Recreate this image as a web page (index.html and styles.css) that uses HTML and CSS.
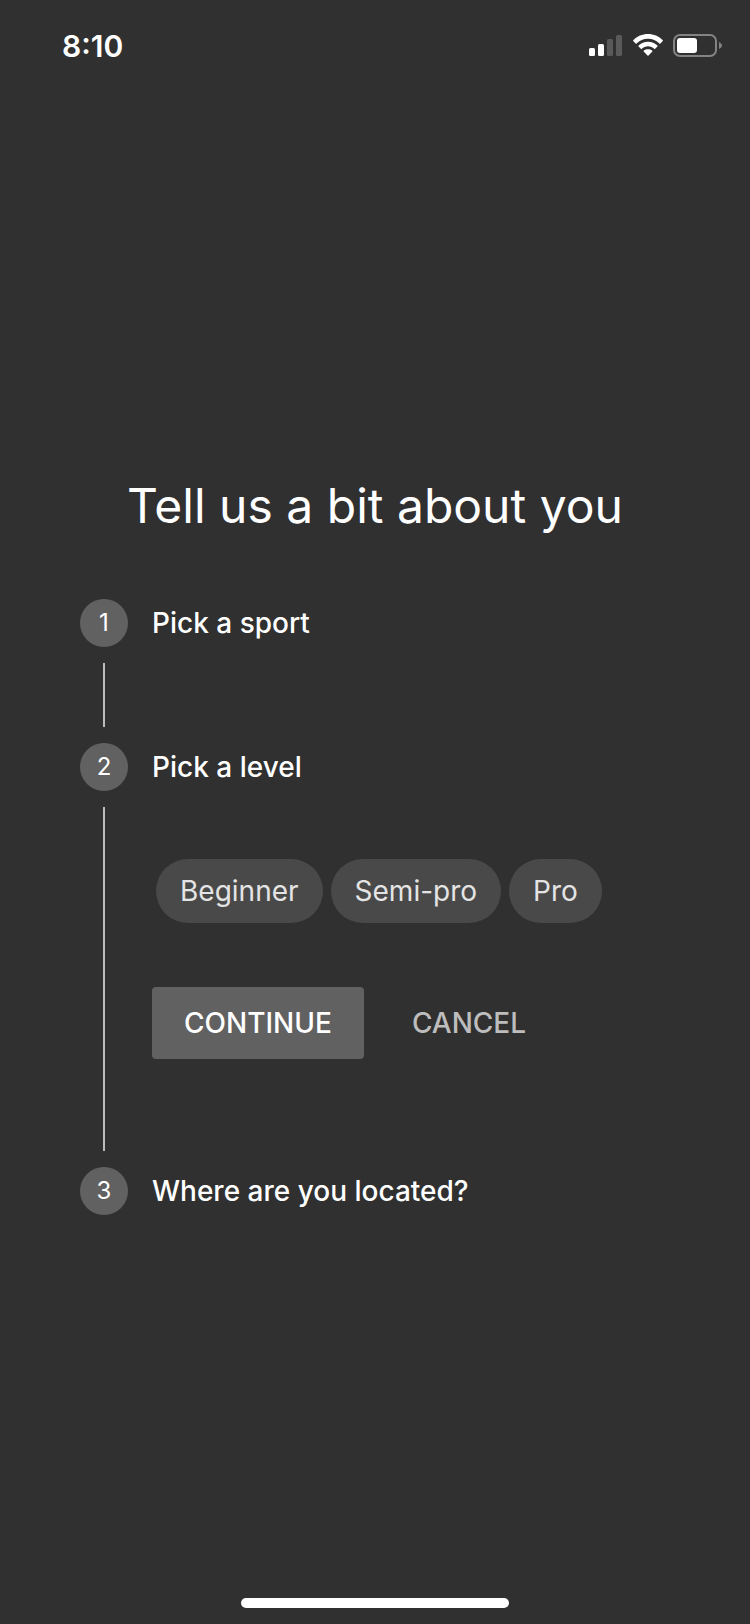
FILE: index.html
```html
<!DOCTYPE html>
<html lang="en">
<head>
<meta charset="utf-8">
<meta name="viewport" content="width=device-width, initial-scale=1">
<title>Tell us a bit about you</title>
<link rel="stylesheet" href="styles.css">
</head>
<body>
<header class="status-bar">
  <time class="status-time">8:10</time>
  <div class="status-icons">
    <svg class="icon-signal" viewBox="0 0 34 22" role="img" aria-label="Signal">
      <rect class="on" x="0" y="14" width="6" height="8" rx="1.5"/>
      <rect class="on" x="9" y="10" width="6" height="12" rx="1.5"/>
      <rect class="off" x="18" y="5" width="6" height="17" rx="1.5"/>
      <rect class="off" x="27" y="1" width="6" height="21" rx="1.5"/>
    </svg>
    <svg class="icon-wifi" viewBox="0 0 30 22" role="img" aria-label="Wi-Fi">
      <path d="M15 0C9.200 0 4 2.300 .4 6.100a.8.8 0 0 0 0 1.100L2.600 9.400a.7.7 0 0 0 1 0C6.500 6.400 10.500 4.700 15 4.700s8.500 1.700 11.400 4.700a.7.7 0 0 0 1 0l2.200-2.200a.8.8 0 0 0 0-1.100C26 2.300 20.800 0 15 0z"/>
      <path d="M15 7.700c-3.700 0-7 1.400-9.400 3.800a.8.8 0 0 0 0 1.100l2.200 2.200a.8.8 0 0 0 1 0c1.600-1.500 3.800-2.500 6.200-2.500s4.600 1 6.200 2.500a.8.8 0 0 0 1 0l2.200-2.200a.8.8 0 0 0 0-1.100C22 9.100 18.700 7.700 15 7.700z"/>
      <path d="M15 15.200c-1.600 0-3 .5-4.100 1.400a.8.8 0 0 0 0 1.200l3.600 3.800a.7.7 0 0 0 1 0l3.600-3.800a.8.8 0 0 0 0-1.200c-1.100-.9-2.500-1.400-4.100-1.400z"/>
    </svg>
    <svg class="icon-battery" viewBox="0 0 50 24" role="img" aria-label="Battery">
      <rect class="shell" x="1" y="1" width="42" height="21" rx="6"/>
      <rect class="charge" x="4" y="4" width="20" height="15" rx="3"/>
      <path class="cap" d="M46 8c1.700.7 3 2.100 3 3.500s-1.300 2.800-3 3.500z"/>
    </svg>
  </div>
</header>

<main class="onboarding">
  <h1 class="title">Tell us a bit about you</h1>
  <ol class="stepper">
    <li class="step">
      <span class="step-number">1</span>
      <h2 class="step-label">Pick a sport</h2>
      <span class="step-line"></span>
    </li>
    <li class="step">
      <span class="step-number">2</span>
      <h2 class="step-label">Pick a level</h2>
      <span class="step-line"></span>
      <div class="step-content">
        <div class="chips">
          <button type="button" class="chip">Beginner</button>
          <button type="button" class="chip">Semi-pro</button>
          <button type="button" class="chip">Pro</button>
        </div>
        <div class="actions">
          <button type="button" class="button button-primary">CONTINUE</button>
          <button type="button" class="button button-text">CANCEL</button>
        </div>
      </div>
    </li>
    <li class="step">
      <span class="step-number">3</span>
      <h2 class="step-label">Where are you located?</h2>
    </li>
  </ol>
</main>

<footer class="home-area"><div class="home-indicator"></div></footer>
</body>
</html>
```
FILE: styles.css
```css
* {
  box-sizing: border-box;
}

body {
  margin: 0;
  min-height: 100vh;
  display: flex;
  flex-direction: column;
  background: #303030;
  color: #fff;
  font-family: Inter, "Liberation Sans", sans-serif;
  font-size: 28px;
}

button {
  border: 0;
  font: inherit;
  color: inherit;
  cursor: pointer;
}

.status-bar {
  height: 96px;
  padding: 28px 27px 0 62px;
  display: flex;
  align-items: flex-start;
  justify-content: space-between;
}

.status-time {
  font-size: 30px;
  line-height: 36px;
  font-weight: 600;
}

.status-icons {
  display: flex;
  gap: 10px;
  padding-top: 6px;
}

.icon-signal {
  width: 34px;
  height: 22px;
}

.icon-signal .on {
  fill: #fff;
}

.icon-signal .off {
  fill: #5a5a5a;
}

.icon-wifi {
  width: 30px;
  height: 22px;
  fill: #fff;
}

.icon-battery {
  width: 50px;
  height: 24px;
}

.icon-battery .shell {
  fill: none;
  stroke: #838383;
  stroke-width: 2;
}

.icon-battery .charge {
  fill: #fff;
}

.icon-battery .cap {
  fill: #838383;
}

.onboarding {
  flex: 1;
  padding: 0 80px;
  display: flex;
  flex-direction: column;
  justify-content: center;
}

.title {
  margin: 0 0 66px;
  font-size: 48px;
  line-height: 54px;
  font-weight: 400;
  text-align: center;
}

.stepper {
  margin: 0;
  padding: 0;
  list-style: none;
  display: flex;
  flex-direction: column;
  gap: 16px;
}

.step {
  display: grid;
  grid-template-columns: 48px 1fr;
  column-gap: 24px;
  row-gap: 16px;
}

.step-number {
  height: 48px;
  border-radius: 50%;
  background: #616161;
  font-size: 24px;
  line-height: 48px;
  text-align: center;
}

.step-label {
  margin: 0;
  font-size: 28px;
  line-height: 48px;
  font-weight: 500;
}

.step-line {
  width: 2px;
  min-height: 64px;
  justify-self: center;
  background: #bdbdbd;
}

.step-content {
  padding: 52px 0 92px;
}

.chips {
  display: flex;
  flex-wrap: wrap;
  gap: 8px;
  padding-left: 4px;
}

.chip {
  height: 64px;
  padding: 0 24px;
  border-radius: 32px;
  background: #494949;
  color: #e4e4e4;
}

.actions {
  display: flex;
  gap: 16px;
  margin-top: 64px;
}

.button {
  height: 72px;
  padding: 0 32px;
  border-radius: 4px;
  font-weight: 500;
}

.button-primary {
  background: #616161;
}

.button-text {
  background: transparent;
  color: #bdbdbd;
}

.home-area {
  padding-bottom: 16px;
  display: flex;
  justify-content: center;
}

.home-indicator {
  width: 268px;
  height: 10px;
  border-radius: 5px;
  background: #fff;
}
```
